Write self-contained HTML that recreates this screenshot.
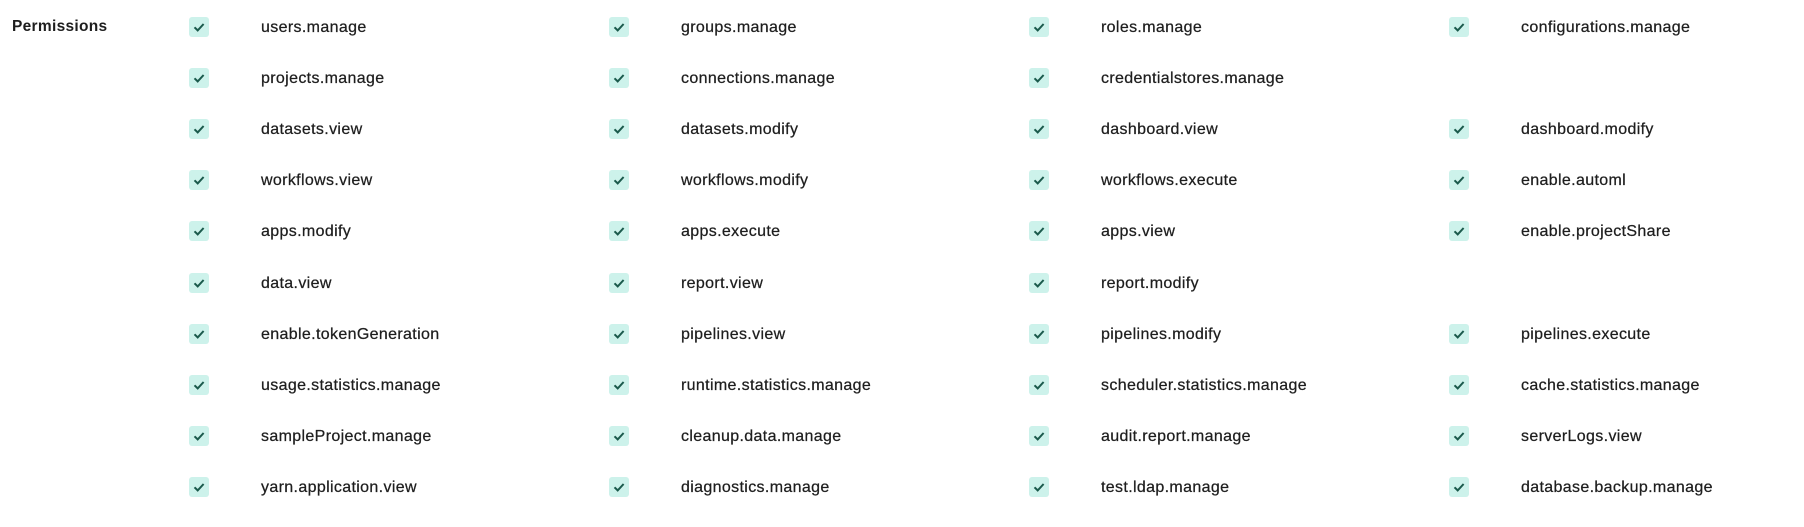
<!DOCTYPE html>
<html><head><meta charset="utf-8"><style>
html,body{margin:0;padding:0;background:#fff;width:1804px;height:527px;overflow:hidden;font-family:"Liberation Sans",sans-serif;color:#1e1e1e}
.l{position:absolute;left:12px;top:17px;font-weight:bold;font-size:15.5px;line-height:20px;letter-spacing:0.3px}
.c{position:absolute;width:20px;height:20px;border-radius:3px;background:#cdf2eb}
.c svg{position:absolute;left:0;top:0}
.t{position:absolute;font-size:16px;line-height:20px;letter-spacing:0.35px;white-space:nowrap;-webkit-text-stroke:0.25px #1e1e1e}
</style></head><body>
<div class="l">Permissions</div>
<div id="g"></div>
<script>
var rows=[
["users.manage","groups.manage","roles.manage","configurations.manage"],
["projects.manage","connections.manage","credentialstores.manage",""],
["datasets.view","datasets.modify","dashboard.view","dashboard.modify"],
["workflows.view","workflows.modify","workflows.execute","enable.automl"],
["apps.modify","apps.execute","apps.view","enable.projectShare"],
["data.view","report.view","report.modify",""],
["enable.tokenGeneration","pipelines.view","pipelines.modify","pipelines.execute"],
["usage.statistics.manage","runtime.statistics.manage","scheduler.statistics.manage","cache.statistics.manage"],
["sampleProject.manage","cleanup.data.manage","audit.report.manage","serverLogs.view"],
["yarn.application.view","diagnostics.manage","test.ldap.manage","database.backup.manage"]];
var h="";
for(var r=0;r<rows.length;r++){var y=17+Math.round(r*51.1);
for(var c=0;c<4;c++){var s=rows[r][c];if(!s)continue;var x=189+c*420;
h+='<div class="c" style="left:'+x+'px;top:'+y+'px"><svg width="20" height="20"><path d="M5.5 10.3L8.7 13.4L14.6 7" fill="none" stroke="#1b5a4c" stroke-width="2"/></svg></div>';
h+='<div class="t" style="left:'+(x+72)+'px;top:'+(y+1)+'px">'+s+'</div>';}}
document.getElementById("g").innerHTML=h;
</script>
</body></html>
